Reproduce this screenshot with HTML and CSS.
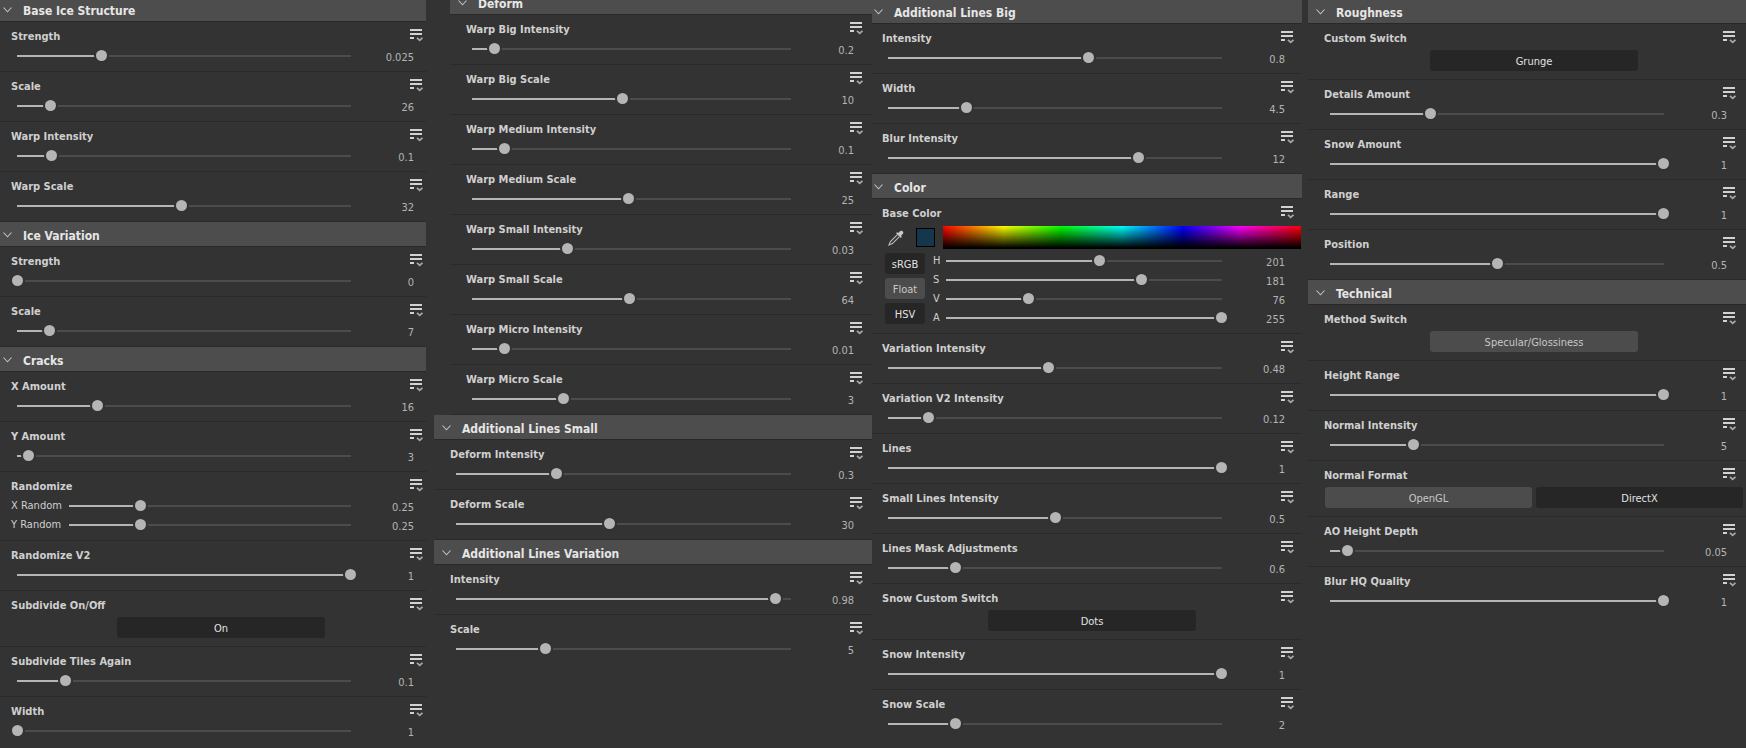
FILE: index.html
```html
<!DOCTYPE html>
<html lang="en">
<head>
<meta charset="utf-8">
<title>Ice material parameters</title>
<link rel="stylesheet" href="styles.css">
</head>
<body>
<svg class="sprite" aria-hidden="true">
  <symbol id="menu" viewBox="0 0 13 16"><path fill="#d2d2d2" d="M0 0h12v2H0zM0 4h12v2H0zM0 8h4v2H0z"/><path d="M7 8.800l2.700 2.500L12.500 8.800" fill="none" stroke="#a8a8a8" stroke-width="1.800"/></symbol>
  <symbol id="chev" viewBox="0 0 9 6"><path d="M.5 .5l4 4.300 4-4.300" fill="none" stroke="#c4c4c4" stroke-width="1.100"/></symbol>
</svg>
<main class="board">

<div class="panel panel-a">
  <section>
    <h2><svg class="chev"><use href="#chev"/></svg>Base Ice Structure</h2>
    <div class="row"><div class="head"><label for="a1">Strength</label><button class="menu" aria-label="Options"><svg><use href="#menu"/></svg></button></div><div class="line"><input id="a1" type="range" max="1" step="any" value=".252" style="--p:.252"><output>0.025</output></div></div>
    <div class="row"><div class="head"><label for="a2">Scale</label><button class="menu" aria-label="Options"><svg><use href="#menu"/></svg></button></div><div class="line"><input id="a2" type="range" max="1" step="any" value=".098" style="--p:.098"><output>26</output></div></div>
    <div class="row"><div class="head"><label for="a3">Warp Intensity</label><button class="menu" aria-label="Options"><svg><use href="#menu"/></svg></button></div><div class="line"><input id="a3" type="range" max="1" step="any" value=".101" style="--p:.101"><output>0.1</output></div></div>
    <div class="row"><div class="head"><label for="a4">Warp Scale</label><button class="menu" aria-label="Options"><svg><use href="#menu"/></svg></button></div><div class="line"><input id="a4" type="range" max="1" step="any" value=".492" style="--p:.492"><output>32</output></div></div>
  </section>
  <section>
    <h2><svg class="chev"><use href="#chev"/></svg>Ice Variation</h2>
    <div class="row"><div class="head"><label for="a5">Strength</label><button class="menu" aria-label="Options"><svg><use href="#menu"/></svg></button></div><div class="line"><input id="a5" type="range" max="1" step="any" value="0" style="--p:0"><output>0</output></div></div>
    <div class="row"><div class="head"><label for="a6">Scale</label><button class="menu" aria-label="Options"><svg><use href="#menu"/></svg></button></div><div class="line"><input id="a6" type="range" max="1" step="any" value=".095" style="--p:.095"><output>7</output></div></div>
  </section>
  <section>
    <h2><svg class="chev"><use href="#chev"/></svg>Cracks</h2>
    <div class="row"><div class="head"><label for="a7">X Amount</label><button class="menu" aria-label="Options"><svg><use href="#menu"/></svg></button></div><div class="line"><input id="a7" type="range" max="1" step="any" value=".239" style="--p:.239"><output>16</output></div></div>
    <div class="row"><div class="head"><label for="a8">Y Amount</label><button class="menu" aria-label="Options"><svg><use href="#menu"/></svg></button></div><div class="line"><input id="a8" type="range" max="1" step="any" value=".032" style="--p:.032"><output>3</output></div></div>
    <div class="row"><div class="head"><span>Randomize</span><button class="menu" aria-label="Options"><svg><use href="#menu"/></svg></button></div>
      <div class="line"><label class="axis" for="a9">X Random</label><input id="a9" type="range" max="1" step="any" value=".252" style="--p:.252"><output>0.25</output></div>
      <div class="line"><label class="axis" for="a10">Y Random</label><input id="a10" type="range" max="1" step="any" value=".252" style="--p:.252"><output>0.25</output></div>
    </div>
    <div class="row"><div class="head"><label for="a11">Randomize V2</label><button class="menu" aria-label="Options"><svg><use href="#menu"/></svg></button></div><div class="line"><input id="a11" type="range" max="1" step="any" value="1" style="--p:1"><output>1</output></div></div>
    <div class="row"><div class="head"><span>Subdivide On/Off</span><button class="menu" aria-label="Options"><svg><use href="#menu"/></svg></button></div><div class="switch"><button class="btn on">On</button></div></div>
    <div class="row"><div class="head"><label for="a12">Subdivide Tiles Again</label><button class="menu" aria-label="Options"><svg><use href="#menu"/></svg></button></div><div class="line"><input id="a12" type="range" max="1" step="any" value=".143" style="--p:.143"><output>0.1</output></div></div>
    <div class="row last"><div class="head"><label for="a13">Width</label><button class="menu" aria-label="Options"><svg><use href="#menu"/></svg></button></div><div class="line"><input id="a13" type="range" max="1" step="any" value="0" style="--p:0"><output>1</output></div></div>
  </section>
</div>

<div class="panel panel-b">
  <section class="nested">
    <h2><svg class="chev"><use href="#chev"/></svg>Deform</h2>
    <div class="row"><div class="head"><label for="b1">Warp Big Intensity</label><button class="menu" aria-label="Options"><svg><use href="#menu"/></svg></button></div><div class="line"><input id="b1" type="range" max="1" step="any" value=".068" style="--p:.068"><output>0.2</output></div></div>
    <div class="row"><div class="head"><label for="b2">Warp Big Scale</label><button class="menu" aria-label="Options"><svg><use href="#menu"/></svg></button></div><div class="line"><input id="b2" type="range" max="1" step="any" value=".472" style="--p:.472"><output>10</output></div></div>
    <div class="row"><div class="head"><label for="b3">Warp Medium Intensity</label><button class="menu" aria-label="Options"><svg><use href="#menu"/></svg></button></div><div class="line"><input id="b3" type="range" max="1" step="any" value=".1" style="--p:.1"><output>0.1</output></div></div>
    <div class="row"><div class="head"><label for="b4">Warp Medium Scale</label><button class="menu" aria-label="Options"><svg><use href="#menu"/></svg></button></div><div class="line"><input id="b4" type="range" max="1" step="any" value=".489" style="--p:.489"><output>25</output></div></div>
    <div class="row"><div class="head"><label for="b5">Warp Small Intensity</label><button class="menu" aria-label="Options"><svg><use href="#menu"/></svg></button></div><div class="line"><input id="b5" type="range" max="1" step="any" value=".299" style="--p:.299"><output>0.03</output></div></div>
    <div class="row"><div class="head"><label for="b6">Warp Small Scale</label><button class="menu" aria-label="Options"><svg><use href="#menu"/></svg></button></div><div class="line"><input id="b6" type="range" max="1" step="any" value=".495" style="--p:.495"><output>64</output></div></div>
    <div class="row"><div class="head"><label for="b7">Warp Micro Intensity</label><button class="menu" aria-label="Options"><svg><use href="#menu"/></svg></button></div><div class="line"><input id="b7" type="range" max="1" step="any" value=".1" style="--p:.1"><output>0.01</output></div></div>
    <div class="row"><div class="head"><label for="b8">Warp Micro Scale</label><button class="menu" aria-label="Options"><svg><use href="#menu"/></svg></button></div><div class="line"><input id="b8" type="range" max="1" step="any" value=".285" style="--p:.285"><output>3</output></div></div>
  </section>
  <section>
    <h2><svg class="chev"><use href="#chev"/></svg>Additional Lines Small</h2>
    <div class="row"><div class="head"><label for="b9">Deform Intensity</label><button class="menu" aria-label="Options"><svg><use href="#menu"/></svg></button></div><div class="line"><input id="b9" type="range" max="1" step="any" value=".298" style="--p:.298"><output>0.3</output></div></div>
    <div class="row"><div class="head"><label for="b10">Deform Scale</label><button class="menu" aria-label="Options"><svg><use href="#menu"/></svg></button></div><div class="line"><input id="b10" type="range" max="1" step="any" value=".458" style="--p:.458"><output>30</output></div></div>
  </section>
  <section>
    <h2><svg class="chev"><use href="#chev"/></svg>Additional Lines Variation</h2>
    <div class="row"><div class="head"><label for="b11">Intensity</label><button class="menu" aria-label="Options"><svg><use href="#menu"/></svg></button></div><div class="line"><input id="b11" type="range" max="1" step="any" value=".956" style="--p:.956"><output>0.98</output></div></div>
    <div class="row last"><div class="head"><label for="b12">Scale</label><button class="menu" aria-label="Options"><svg><use href="#menu"/></svg></button></div><div class="line"><input id="b12" type="range" max="1" step="any" value=".265" style="--p:.265"><output>5</output></div></div>
  </section>
</div>

<div class="panel panel-c">
  <section>
    <h2><svg class="chev"><use href="#chev"/></svg>Additional Lines Big</h2>
    <div class="row"><div class="head"><label for="c1">Intensity</label><button class="menu" aria-label="Options"><svg><use href="#menu"/></svg></button></div><div class="line"><input id="c1" type="range" max="1" step="any" value=".6" style="--p:.6"><output>0.8</output></div></div>
    <div class="row"><div class="head"><label for="c2">Width</label><button class="menu" aria-label="Options"><svg><use href="#menu"/></svg></button></div><div class="line"><input id="c2" type="range" max="1" step="any" value=".233" style="--p:.233"><output>4.5</output></div></div>
    <div class="row"><div class="head"><label for="c3">Blur Intensity</label><button class="menu" aria-label="Options"><svg><use href="#menu"/></svg></button></div><div class="line"><input id="c3" type="range" max="1" step="any" value=".75" style="--p:.75"><output>12</output></div></div>
  </section>
  <section>
    <h2><svg class="chev"><use href="#chev"/></svg>Color</h2>
    <div class="row"><div class="head"><span>Base Color</span><button class="menu" aria-label="Options"><svg><use href="#menu"/></svg></button></div>
      <div class="picker">
        <button class="dropper" aria-label="Pick color"><svg viewBox="0 0 16 16"><path d="M9.200 4.800L2.400 11.600 1 15l3.400-1.400 6.800-6.800" fill="none" stroke="#bdbdbd" stroke-width="1.100"/><path fill="#c8c8c8" d="M8 3.200l1.200-1 1 .9L12 1.200C14-.4 16.400 2 14.800 4L13 5.800l.9 1-1.100 1.200z"/></svg></button>
        <button class="swatch" aria-label="Current color"></button>
        <div class="spectrum"></div>
      </div>
      <div class="channels">
        <div class="modes"><button class="btn on">sRGB</button><button class="btn">Float</button><button class="btn on">HSV</button></div>
        <div class="lines">
          <div class="line"><label class="chan" for="c4">H</label><input id="c4" type="range" max="1" step="any" value=".558" style="--p:.558"><output>201</output></div>
          <div class="line"><label class="chan" for="c5">S</label><input id="c5" type="range" max="1" step="any" value=".708" style="--p:.708"><output>181</output></div>
          <div class="line"><label class="chan" for="c6">V</label><input id="c6" type="range" max="1" step="any" value=".298" style="--p:.298"><output>76</output></div>
          <div class="line"><label class="chan" for="c7">A</label><input id="c7" type="range" max="1" step="any" value="1" style="--p:1"><output>255</output></div>
        </div>
      </div>
    </div>
    <div class="row"><div class="head"><label for="c8">Variation Intensity</label><button class="menu" aria-label="Options"><svg><use href="#menu"/></svg></button></div><div class="line"><input id="c8" type="range" max="1" step="any" value=".48" style="--p:.48"><output>0.48</output></div></div>
    <div class="row"><div class="head"><label for="c9">Variation V2 Intensity</label><button class="menu" aria-label="Options"><svg><use href="#menu"/></svg></button></div><div class="line"><input id="c9" type="range" max="1" step="any" value=".119" style="--p:.119"><output>0.12</output></div></div>
    <div class="row"><div class="head"><label for="c10">Lines</label><button class="menu" aria-label="Options"><svg><use href="#menu"/></svg></button></div><div class="line"><input id="c10" type="range" max="1" step="any" value="1" style="--p:1"><output>1</output></div></div>
    <div class="row"><div class="head"><label for="c11">Small Lines Intensity</label><button class="menu" aria-label="Options"><svg><use href="#menu"/></svg></button></div><div class="line"><input id="c11" type="range" max="1" step="any" value=".5" style="--p:.5"><output>0.5</output></div></div>
    <div class="row"><div class="head"><label for="c12">Lines Mask Adjustments</label><button class="menu" aria-label="Options"><svg><use href="#menu"/></svg></button></div><div class="line"><input id="c12" type="range" max="1" step="any" value=".2" style="--p:.2"><output>0.6</output></div></div>
    <div class="row"><div class="head"><span>Snow Custom Switch</span><button class="menu" aria-label="Options"><svg><use href="#menu"/></svg></button></div><div class="switch"><button class="btn on">Dots</button></div></div>
    <div class="row"><div class="head"><label for="c13">Snow Intensity</label><button class="menu" aria-label="Options"><svg><use href="#menu"/></svg></button></div><div class="line"><input id="c13" type="range" max="1" step="any" value="1" style="--p:1"><output>1</output></div></div>
    <div class="row last"><div class="head"><label for="c14">Snow Scale</label><button class="menu" aria-label="Options"><svg><use href="#menu"/></svg></button></div><div class="line"><input id="c14" type="range" max="1" step="any" value=".2" style="--p:.2"><output>2</output></div></div>
  </section>
</div>

<div class="panel panel-d">
  <section>
    <h2><svg class="chev"><use href="#chev"/></svg>Roughness</h2>
    <div class="row"><div class="head"><span>Custom Switch</span><button class="menu" aria-label="Options"><svg><use href="#menu"/></svg></button></div><div class="switch"><button class="btn on">Grunge</button></div></div>
    <div class="row"><div class="head"><label for="d1">Details Amount</label><button class="menu" aria-label="Options"><svg><use href="#menu"/></svg></button></div><div class="line"><input id="d1" type="range" max="1" step="any" value=".3" style="--p:.3"><output>0.3</output></div></div>
    <div class="row"><div class="head"><label for="d2">Snow Amount</label><button class="menu" aria-label="Options"><svg><use href="#menu"/></svg></button></div><div class="line"><input id="d2" type="range" max="1" step="any" value="1" style="--p:1"><output>1</output></div></div>
    <div class="row"><div class="head"><label for="d3">Range</label><button class="menu" aria-label="Options"><svg><use href="#menu"/></svg></button></div><div class="line"><input id="d3" type="range" max="1" step="any" value="1" style="--p:1"><output>1</output></div></div>
    <div class="row"><div class="head"><label for="d4">Position</label><button class="menu" aria-label="Options"><svg><use href="#menu"/></svg></button></div><div class="line"><input id="d4" type="range" max="1" step="any" value=".5" style="--p:.5"><output>0.5</output></div></div>
  </section>
  <section>
    <h2><svg class="chev"><use href="#chev"/></svg>Technical</h2>
    <div class="row"><div class="head"><span>Method Switch</span><button class="menu" aria-label="Options"><svg><use href="#menu"/></svg></button></div><div class="switch"><button class="btn">Specular/Glossiness</button></div></div>
    <div class="row"><div class="head"><label for="d5">Height Range</label><button class="menu" aria-label="Options"><svg><use href="#menu"/></svg></button></div><div class="line"><input id="d5" type="range" max="1" step="any" value="1" style="--p:1"><output>1</output></div></div>
    <div class="row"><div class="head"><label for="d6">Normal Intensity</label><button class="menu" aria-label="Options"><svg><use href="#menu"/></svg></button></div><div class="line"><input id="d6" type="range" max="1" step="any" value=".25" style="--p:.25"><output>5</output></div></div>
    <div class="row"><div class="head"><span>Normal Format</span><button class="menu" aria-label="Options"><svg><use href="#menu"/></svg></button></div><div class="switch pair"><button class="btn">OpenGL</button><button class="btn on">DirectX</button></div></div>
    <div class="row"><div class="head"><label for="d7">AO Height Depth</label><button class="menu" aria-label="Options"><svg><use href="#menu"/></svg></button></div><div class="line"><input id="d7" type="range" max="1" step="any" value=".05" style="--p:.05"><output>0.05</output></div></div>
    <div class="row last"><div class="head"><label for="d8">Blur HQ Quality</label><button class="menu" aria-label="Options"><svg><use href="#menu"/></svg></button></div><div class="line"><input id="d8" type="range" max="1" step="any" value="1" style="--p:1"><output>1</output></div></div>
  </section>
</div>

</main>
</body>
</html>
```

FILE: styles.css
```css
* { box-sizing: border-box; }

body {
  margin: 0;
  min-height: 100vh;
  overflow-x: hidden;
  background: #333;
  color: #cfcfcf;
  font: 11px/16px "DejaVu Sans Condensed", "DejaVu Sans", sans-serif;
}

.sprite { display: none; }

.board {
  display: grid;
  grid-template-columns: 426fr 446fr 430fr 444fr;
  align-items: start;
  overflow: hidden;
}

/* Each panel is scrolled by a few pixels of its own */
.panel { --left: 8px; --right: 10px; min-width: 0; margin-top: -1px; }
.panel-a { --left: 3px; --right: 4px; margin-top: -3px; }
.panel-b { margin-left: 8px; margin-top: -10px; }
.panel-c { --left: 2px; --right: 9px; }
.panel-d { --right: 11px; margin-left: 6px; }
.nested { margin-left: 16px; }

h2 {
  display: flex;
  align-items: center;
  gap: 11px;
  height: 25px;
  margin: 0;
  padding: 4px 0 0 var(--left);
  background: #4d4d4d;
  border-bottom: 1px solid #282828;
  color: #e6e6e6;
  font-size: 12px;
  font-weight: bold;
}
.chev { width: 9px; height: 6px; margin-bottom: 2px; }

.row {
  padding: 0 var(--right) 6px calc(var(--left) + 8px);
  border-bottom: 1px solid #2a2a2a;
}
.row.last { border-bottom-color: transparent; }

.head {
  display: flex;
  justify-content: space-between;
  align-items: center;
  height: 24px;
  padding-top: 6px;
  font-weight: bold;
}
.menu {
  width: 12px;
  height: 16px;
  padding: 0;
  border: 0;
  background: none;
}
.menu svg { display: block; width: 13px; height: 16px; }

.line { display: flex; align-items: center; height: 19px; }
.axis { width: 52px; white-space: nowrap; }
.chan { width: 7px; }

output {
  width: 66px;
  padding: 4px 8px 0 0;
  text-align: right;
  color: #b4b4b4;
}

input[type="range"] {
  -webkit-appearance: none;
  appearance: none;
  flex: 1;
  min-width: 0;
  height: 11px;
  margin: 0 0 0 1px;
  background: none;
}
input[type="range"]::-webkit-slider-runnable-track {
  height: 11px;
  background:
    linear-gradient(#b5b5b5, #b5b5b5) 5px 5px / calc((100% - 11px) * var(--p)) 2px no-repeat,
    linear-gradient(#4c4c4c, #4c4c4c) 5px 5px / calc(100% - 10px) 2px no-repeat;
}
input[type="range"]::-webkit-slider-thumb {
  -webkit-appearance: none;
  width: 11px;
  height: 11px;
  border-radius: 50%;
  background: #b5b5b5;
  box-shadow: 0 0 0 2px #333;
}

.switch {
  display: flex;
  justify-content: center;
  gap: 4px;
  margin: 0 -8px 0 1px;
  padding: 2px 0;
}
.btn {
  width: calc(50% - 1px);
  height: 21px;
  padding: 2px 0 0;
  border: 0;
  border-radius: 3px;
  background: #4c4c4c;
  color: #c8c8c8;
  font: inherit;
}
.btn.on { background: #262626; color: #e2e2e2; }
.pair .btn { flex: 1; }

.picker {
  display: flex;
  align-items: center;
  gap: 8px;
  height: 26px;
  margin-right: -8px;
  padding: 3px 0 0 6px;
}
.dropper { width: 20px; height: 16px; padding: 0; border: 0; background: none; }
.dropper svg { display: block; width: 16px; height: 16px; }
.swatch {
  width: 19px;
  height: 19px;
  padding: 0;
  border: 1px solid #000;
  background: #16364b;
}
.spectrum {
  flex: 1;
  height: 23px;
  background:
    linear-gradient(transparent, #000 95%),
    linear-gradient(90deg, #f00, #ff0 17%, #0f0 33%, #0ff 50%, #00f 67%, #f0f 83%, #f00);
}

.channels { display: flex; padding-top: 2px; }
.modes {
  display: flex;
  flex-direction: column;
  gap: 4px;
  width: 51px;
  padding: 2px 8px 0 3px;
}
.modes .btn { width: 100%; }
.lines { flex: 1; min-width: 0; }
```
